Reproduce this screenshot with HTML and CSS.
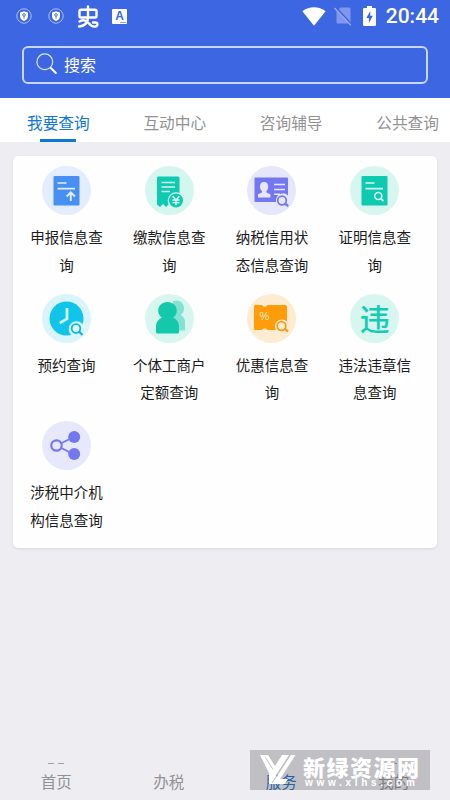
FILE: index.html
```html
<!DOCTYPE html>
<html lang="zh-CN">
<head>
<meta charset="utf-8">
<meta name="viewport" content="width=device-width, initial-scale=1">
<title>我要查询</title>
<link rel="stylesheet" href="styles.css">
</head>
<body>
<header class="header">
  <div class="status">
    <svg class="shield" viewBox="0 0 16 16"><circle cx="8" cy="8" r="7.2" fill="none" stroke="#a9bdf6" stroke-width="1"/><path d="M8 3.2 12 4.600V8c0 2.500-1.700 4.200-4 5-2.300-.8-4-2.500-4-5V4.600z" fill="#fff"/><circle cx="8" cy="7" r="1.300" fill="none" stroke="#3d66e2" stroke-width=".9"/><path d="M8 8.200v2.200" stroke="#3d66e2" stroke-width=".9"/></svg>
    <svg class="shield" viewBox="0 0 16 16"><circle cx="8" cy="8" r="7.2" fill="none" stroke="#a9bdf6" stroke-width="1"/><path d="M8 3.2 12 4.600V8c0 2.500-1.700 4.200-4 5-2.300-.8-4-2.500-4-5V4.600z" fill="#fff"/><circle cx="8" cy="7" r="1.300" fill="none" stroke="#3d66e2" stroke-width=".9"/><path d="M8 8.200v2.200" stroke="#3d66e2" stroke-width=".9"/></svg>
    <svg class="bug" viewBox="0 0 22 24"><g fill="none" stroke="#fff" stroke-width="2.400" stroke-linecap="round" stroke-linejoin="round"><rect x="2.500" y="4.800" width="17" height="7.700" rx="1.500"/><path d="M11 1.500v12M11 13.500C10.500 18 7.500 21 2 21.500M2.500 16.500C6 14.500 9 15 11.500 18s4.500 4 7 3.500 2.500-4 0-4h-2.500"/></g></svg>
    <span class="badge-a">A<i class="badge-mark"></i></span>
    <span class="spacer"></span>
    <svg class="wifi" viewBox="0 0 24 19"><path d="M.4 4.200C7-1 17-1 23.600 4.200L12 18.700z" fill="#fff"/></svg>
    <svg class="sim" viewBox="0 0 18 20"><path d="M6.500 1.500H15a1.500 1.500 0 0 1 1.500 1.500v14.500H4a1.500 1.500 0 0 1-1.500-1.500V5.500z" fill="#8097ed"/><path d="M1.300 1.300 17 18.300" stroke="#3d66e2" stroke-width="2.600"/><path d="M.5 2 16.800 19.300" stroke="#9aacf1" stroke-width="1.300"/></svg>
    <svg class="battery" viewBox="0 0 13 20"><path d="M4 0h5v2h2.800a1.200 1.200 0 0 1 1.200 1.200V18.800A1.200 1.200 0 0 1 11.800 20H1.200A1.200 1.200 0 0 1 0 18.800V3.200A1.200 1.200 0 0 1 1.200 2H4z" fill="#fff"/><path d="M7.300 5 3.300 12h2.600v5l4-7.300H7.300z" fill="#3d66e2"/></svg>
    <span class="time">20:44</span>
  </div>
  <div class="search">
    <svg class="search-icon" viewBox="0 0 22 22"><circle cx="8.800" cy="8.800" r="7.900" fill="none" stroke="#dce5ff" stroke-width="1.200"/><path d="m14.800 15 5 5" stroke="#fff" stroke-width="2" stroke-linecap="round"/></svg>
    <span>搜索</span>
  </div>
</header>

<nav class="tabs">
  <a class="tab active">我要查询</a>
  <a class="tab">互动中心</a>
  <a class="tab">咨询辅导</a>
  <a class="tab">公共查询</a>
</nav>

<main class="card">
  <div class="item">
    <svg class="icon" viewBox="0 0 49 49"><circle cx="24.500" cy="24.500" r="24.500" fill="#e3edfd"/><rect x="11.500" y="10" width="26" height="29.500" rx="1" fill="#4790f2"/><g fill="none" stroke="#e3edfd" stroke-width="1.700"><path d="M15.500 17h9M15.500 22.700h17.500"/><path d="M28.800 35v-8.500M24.700 30.500l4.100-4.100 4.100 4.100" stroke-width="1.900"/></g></svg>
    <p class="label">申报信息查询</p>
  </div>
  <div class="item">
    <svg class="icon" viewBox="0 0 49 49"><circle cx="24.500" cy="24.500" r="24.500" fill="#d5f6ee"/><path d="M13 10.500h20a1.500 1.500 0 0 1 1.500 1.500v28.500H27l-3-2.500-3 3-3-3-3 3-3-2.500V11.500z" fill="#0dcab0"/><path d="M16.500 16.500h13.500M16.500 21h13.500M16.500 25.500h8.500" stroke="#d5f6ee" stroke-width="1.600"/><circle cx="31" cy="34.500" r="8.300" fill="#d5f6ee"/><circle cx="31" cy="34.500" r="7" fill="#0dcab0"/><path d="m27.700 30.300 3.300 3.700 3.300-3.700M31 34v5.200M27.500 34h7M27.500 36.600h7" fill="none" stroke="#e5faf5" stroke-width="1.400"/></svg>
    <p class="label">缴款信息查询</p>
  </div>
  <div class="item">
    <svg class="icon" viewBox="0 0 49 49"><circle cx="24.500" cy="24.500" r="24.500" fill="#e7e7fc"/><rect x="7.500" y="11.500" width="33.500" height="24.500" rx="1" fill="#7378f1"/><path d="M17 16c2.800 0 4.200 1.900 4.200 4.500 0 2-.8 3.500-1.800 4.500v1.500l4 1.700v3.300H11v-3.300l4-1.700V25c-1.300-1-2-2.500-2-4.500 0-2.600 1.300-4.500 4-4.500z" fill="#e7e7fc"/><path d="M27 18.500h11M27 23.500h11M27 28.300h6" stroke="#e7e7fc" stroke-width="1.600"/><path d="M29 38V34a7 7 0 0 1 12.500-4V38z" fill="#e7e7fc"/><circle cx="35" cy="34.500" r="4.300" fill="none" stroke="#7378f1" stroke-width="1.700"/><path d="m38 37.500 3.300 2.700" stroke="#7378f1" stroke-width="2.300"/></svg>
    <p class="label">纳税信用状态信息查询</p>
  </div>
  <div class="item">
    <svg class="icon" viewBox="0 0 49 49"><circle cx="24.500" cy="24.500" r="24.500" fill="#d7f6ef"/><rect x="11.500" y="10" width="26" height="29.500" rx="1" fill="#0dcab0"/><g fill="none" stroke="#d7f6ef" stroke-width="1.700"><path d="M15.500 17h9M15.500 22.700h17.500"/><circle cx="28.300" cy="30" r="3.500"/><path d="m30.500 32.500 3 2.500" stroke-width="2"/></g></svg>
    <p class="label">证明信息查询</p>
  </div>
  <div class="item">
    <svg class="icon" viewBox="0 0 49 49"><circle cx="24.500" cy="24.500" r="24.500" fill="#d9f5fb"/><circle cx="24.500" cy="24.500" r="17" fill="#10c4ea"/><path d="M25 14v10.800l-7.200 4.200" fill="none" stroke="#d9f5fb" stroke-width="2.700"/><circle cx="34.500" cy="35" r="7.800" fill="#d9f5fb"/><circle cx="34" cy="34.500" r="4.300" fill="none" stroke="#10b6df" stroke-width="1.800"/><path d="m37 37.500 3.500 3.500" stroke="#10b6df" stroke-width="2.300"/></svg>
    <p class="label">预约查询</p>
  </div>
  <div class="item">
    <svg class="icon" viewBox="0 0 49 49"><circle cx="24.500" cy="24.500" r="24.500" fill="#d7f6ef"/><path d="M31 6.500c5 0 8 3.500 8 8 0 3-1.300 5.200-3.300 6.500 2.600 1.300 4.300 3.500 4.300 7V36.500H28V7.200z" fill="#83e2d2"/><path d="M22.500 8c5.500 0 9.300 3.800 9.300 8.800 0 3-1.500 5.400-3.800 7 3.500 1.400 6 4.400 6 8.700v5.500a1.500 1.500 0 0 1-1.500 1.500h-20A1.500 1.500 0 0 1 11 38v-5.500c0-4.300 2.500-7.300 6-8.700-2.300-1.600-3.800-4-3.800-7 0-5 3.800-8.800 9.300-8.800z" fill="#14c9ab"/></svg>
    <p class="label">个体工商户定额查询</p>
  </div>
  <div class="item">
    <svg class="icon" viewBox="0 0 49 49"><circle cx="24.500" cy="24.500" r="24.500" fill="#fdecd2"/><path d="M8.500 11H15a3 3 0 0 0 5.400 0H38.500a1.500 1.500 0 0 1 1.500 1.500v22a1.500 1.500 0 0 1-1.500 1.500H20.400a3 3 0 0 0-5.400 0H8.500a1.500 1.500 0 0 1-1.500-1.500v-22A1.500 1.500 0 0 1 8.500 11z" fill="#fe9c0a"/><text class="percent" x="17.500" y="26" text-anchor="middle">%</text><circle cx="35" cy="32.500" r="7" fill="#fdecd2"/><circle cx="34.500" cy="32" r="4.300" fill="none" stroke="#f49811" stroke-width="1.700"/><path d="m37.500 34.500 3.500 3" stroke="#f49811" stroke-width="2.300"/></svg>
    <p class="label">优惠信息查询</p>
  </div>
  <div class="item">
    <span class="icon word-icon">违</span>
    <p class="label">违法违章信息查询</p>
  </div>
  <div class="item">
    <svg class="icon" viewBox="0 0 49 49"><circle cx="24.500" cy="24.500" r="24.500" fill="#e8e8fc"/><path d="M32 16 14.500 24.500 32 33.500" fill="none" stroke="#7378f1" stroke-width="1.800"/><circle cx="14.500" cy="24.500" r="5.200" fill="#e8e8fc" stroke="#7378f1" stroke-width="2.200"/><circle cx="32.200" cy="16" r="6" fill="#7378f1"/><circle cx="32.200" cy="33" r="6" fill="#7378f1"/></svg>
    <p class="label">涉税中介机构信息查询</p>
  </div>
</main>

<footer class="bottom">
  <a class="nav"><span class="dashes"><i></i><i></i></span>首页</a>
  <a class="nav"><span class="dashes"></span>办税</a>
  <a class="nav current"><span class="dashes"></span>服务</a>
  <a class="nav"><span class="dashes"><i></i></span>我的</a>
  <div class="watermark">
    <svg class="mark" viewBox="0 0 36 30"><path d="M0 0h8l7 11L22 0h7L16 20v9H9V18z" fill="#fff"/><path d="M31 0h4.500L20 24h8l-3.500 5H12z" fill="#fff"/><path d="M5.500 2.500 13 14.500M30 0 12 28" fill="none" stroke="#c2c1c6" stroke-width="1"/></svg>
    <div class="mark-text"><b>新绿资源网</b><span>www.xlhs.com</span></div>
  </div>
</footer>
</body>
</html>
```

FILE: styles.css
```css
* {
  box-sizing: border-box;
}

body {
  margin: 0;
  width: 450px;
  height: 800px;
  overflow: hidden;
  display: flex;
  flex-direction: column;
  background: #eeedf2;
  color: #1c1c1c;
  font-family: "Noto Sans CJK SC", sans-serif;
}

svg {
  display: block;
  flex: none;
}

.header {
  height: 98px;
  flex: none;
  background: #3d66e2;
}

.status {
  display: flex;
  align-items: center;
  height: 32px;
  padding: 0 11px 0 16px;
}

.shield {
  width: 16px;
  height: 16px;
  margin-right: 16px;
}

.bug {
  width: 22px;
  height: 24px;
  margin: 1px 13px 0 -3px;
}

.badge-a {
  position: relative;
  width: 15px;
  height: 15px;
  border-radius: 1px;
  background: #fff;
  color: #3d66e2;
  font: bold 12px/15px "Liberation Sans", sans-serif;
  text-align: center;
}

.badge-mark {
  position: absolute;
  right: 1px;
  bottom: 1px;
  width: 6px;
  height: 1px;
  background: #8fa6ed;
}

.spacer {
  flex: 1;
}

.wifi {
  width: 24px;
  height: 19px;
  margin-right: 8px;
}

.sim {
  width: 18px;
  height: 20px;
  margin-right: 11px;
}

.battery {
  width: 13px;
  height: 20px;
  margin-right: 10px;
}

.time {
  color: #fff;
  font: 500 21px/32px Roboto, sans-serif;
}

.search {
  display: flex;
  align-items: center;
  gap: 6px;
  height: 38px;
  margin: 14px 22px 0;
  padding-left: 12px;
  border: 2px solid #c8d6fb;
  border-radius: 6px;
  color: #fff;
  font-size: 16px;
  line-height: 32px;
}

.search span {
  margin-top: -2px;
}

.search-icon {
  width: 22px;
  height: 22px;
  margin-top: -3px;
}

.tabs {
  display: flex;
  flex: none;
  justify-content: space-between;
  height: 44px;
  padding: 0 11px 0 27px;
  background: #fff;
}

.tab {
  display: flex;
  flex-direction: column;
  align-items: center;
  justify-content: space-between;
  height: 44px;
  color: #929292;
  font-size: 15.700px;
  line-height: 50px;
}

.tab.active {
  color: #1078d8;
}

.tab.active::after {
  content: "";
  width: 36px;
  height: 3px;
  flex: none;
  margin-top: -9px;
  background: #1078d8;
}

.card {
  display: grid;
  grid-template-columns: repeat(4, 102.800px);
  grid-auto-rows: 127.500px;
  flex: none;
  height: 392px;
  margin: 14px 13px 0;
  padding: 10px 0 0 2px;
  border-radius: 5px;
  background: #fefefe;
  box-shadow: 0 1px 3px rgba(0, 0, 0, .1);
}

.item {
  display: flex;
  flex-direction: column;
  align-items: center;
}

.icon {
  width: 49px;
  height: 49px;
  flex: none;
}

.word-icon {
  border-radius: 50%;
  background: #d7f6ef;
  color: #12cdb2;
  font-size: 30px;
  font-weight: 500;
  line-height: 47px;
  text-align: center;
}

.percent {
  fill: #fdecd2;
  font: 11px "Liberation Sans", sans-serif;
}

.label {
  width: 74px;
  margin: 8.400px 0 0;
  font-size: 14.500px;
  line-height: 27.500px;
  text-align: center;
}

.bottom {
  position: relative;
  display: flex;
  height: 50px;
  margin-top: auto;
  flex: none;
}

.nav {
  width: 112.800px;
  color: #929294;
  font-size: 15.500px;
  line-height: 22px;
  text-align: center;
}

.nav.current {
  color: #1b6fc9;
}

.dashes {
  display: flex;
  justify-content: center;
  gap: 4px;
  height: 20px;
  padding-top: 13px;
}

.dashes i {
  width: 6px;
  height: 1px;
  background: #a4a4a6;
}

.watermark {
  position: absolute;
  left: 250px;
  top: 0;
  display: flex;
  gap: 7px;
  width: 180px;
  height: 40px;
  padding: 5px 0 0 10px;
  background: rgba(70, 70, 75, .27);
  color: #fff;
}

.mark {
  width: 36px;
  height: 30px;
}

.mark-text {
  display: flex;
  flex-direction: column;
}

.mark-text b {
  font-size: 22px;
  font-weight: 900;
  line-height: 22px;
  letter-spacing: 1.500px;
  white-space: nowrap;
}

.mark-text span {
  padding-left: 2px;
  font: bold 10px/12px "Liberation Sans", sans-serif;
  letter-spacing: 3.700px;
  white-space: nowrap;
}
```
